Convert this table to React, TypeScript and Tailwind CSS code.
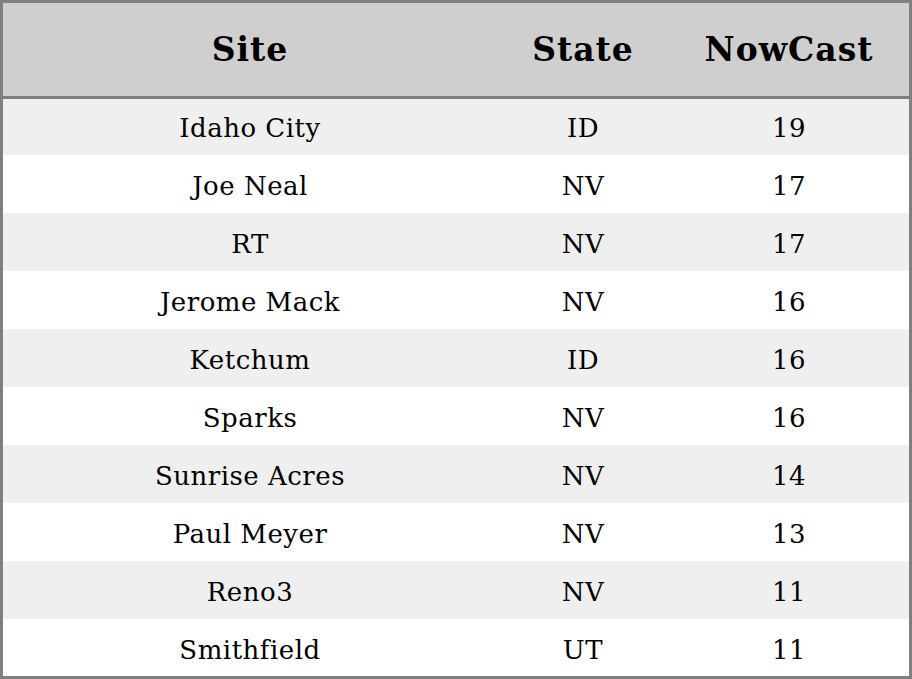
const rows: [string, string, number][] = [
  ["Idaho City", "ID", 19],
  ["Joe Neal", "NV", 17],
  ["RT", "NV", 17],
  ["Jerome Mack", "NV", 16],
  ["Ketchum", "ID", 16],
  ["Sparks", "NV", 16],
  ["Sunrise Acres", "NV", 14],
  ["Paul Meyer", "NV", 13],
  ["Reno3", "NV", 11],
  ["Smithfield", "UT", 11],
];

export default function App() {
  return (
    <div className="w-[912px] h-[679px] bg-white font-['DejaVu_Serif',serif] text-black">
      <div className="border-[3px] border-[#808080] h-full overflow-hidden">
        <div className="relative z-10 grid grid-cols-[494px_172px_240px] h-[96px] bg-[#cfcfcf] border-b-[3px] border-[#808080] items-center text-center text-[33px] tracking-[1px] font-bold">
          <div>Site</div>
          <div>State</div>
          <div>NowCast</div>
        </div>
        <div className="-mt-[2px]">
          {rows.map(([site, state, now], i) => (
            <div
              key={i}
              className={`grid grid-cols-[494px_172px_240px] h-[58px] pt-[4px] items-center text-center text-[26px] tracking-[0.5px] ${
                i % 2 === 0 ? "bg-[#efefef]" : "bg-white"
              }`}
            >
              <div>{site}</div>
              <div>{state}</div>
              <div>{now}</div>
            </div>
          ))}
        </div>
      </div>
    </div>
  );
}
